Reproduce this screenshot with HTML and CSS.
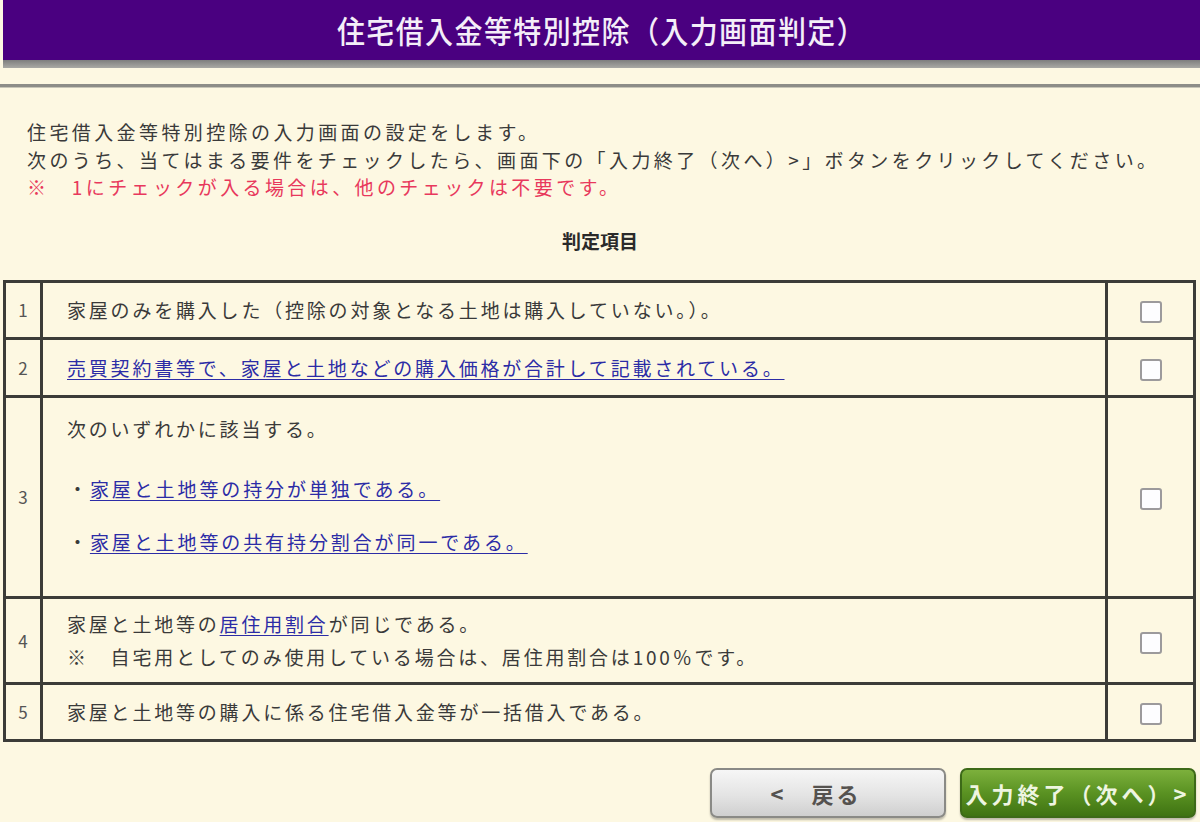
FILE: index.html
```html
<!DOCTYPE html>
<html lang="ja">
<head>
<meta charset="utf-8">
<title>住宅借入金等特別控除（入力画面判定）</title>
<link rel="stylesheet" href="styles.css">
</head>
<body>
<header class="page-header">
  <h1 class="page-title">住宅借入金等特別控除（入力画面判定）</h1>
</header>
<div class="header-shadow"></div>
<div class="divider"></div>

<section class="intro">
  <p>住宅借入金等特別控除の入力画面の設定をします。</p>
  <p>次のうち、当てはまる要件をチェックしたら、画面下の「入力終了（次へ）&gt;」ボタンをクリックしてください。</p>
  <p class="note">※　1にチェックが入る場合は、他のチェックは不要です。</p>
</section>

<h2 class="table-caption">判定項目</h2>

<table class="judge">
  <tr class="r1">
    <td class="num">1</td>
    <td class="desc">家屋のみを購入した（控除の対象となる土地は購入していない。）。</td>
    <td class="chk"><span class="box"></span></td>
  </tr>
  <tr class="r2">
    <td class="num">2</td>
    <td class="desc"><a href="#">売買契約書等で、家屋と土地などの購入価格が合計して記載されている。</a></td>
    <td class="chk"><span class="box"></span></td>
  </tr>
  <tr class="r3">
    <td class="num">3</td>
    <td class="desc">
      <p class="lead">次のいずれかに該当する。</p>
      <p class="bullet b1">・<a href="#">家屋と土地等の持分が単独である。</a></p>
      <p class="bullet b2">・<a href="#">家屋と土地等の共有持分割合が同一である。</a></p>
    </td>
    <td class="chk"><span class="box"></span></td>
  </tr>
  <tr class="r4">
    <td class="num">4</td>
    <td class="desc">家屋と土地等の<a href="#">居住用割合</a>が同じである。<br>※　自宅用としてのみ使用している場合は、居住用割合は100％です。</td>
    <td class="chk"><span class="box"></span></td>
  </tr>
  <tr class="r5">
    <td class="num">5</td>
    <td class="desc">家屋と土地等の購入に係る住宅借入金等が一括借入である。</td>
    <td class="chk"><span class="box"></span></td>
  </tr>
</table>

<div class="actions">
  <button class="btn btn-back">&lt;　戻る</button>
  <button class="btn btn-next">入力終了（次へ）&gt;</button>
</div>
</body>
</html>
```

FILE: styles.css
```css
html, body {
  margin: 0;
  padding: 0;
}
body {
  background: #fdf8e2;
  font-family: "Noto Sans CJK JP", "Noto Sans", sans-serif;
  color: #3a3a3a;
  width: 1200px;
  height: 822px;
  overflow: hidden;
}
.page-header {
  margin-left: 3px;
  height: 60px;
  background: #4a0080;
  display: flex;
  align-items: center;
  justify-content: center;
}
.page-title {
  margin: 0;
  color: #f4eef8;
  font-size: 28px;
  font-weight: 500;
  letter-spacing: 1.4px;
  transform: scaleY(1.08);
}
.header-shadow {
  margin-left: 3px;
  height: 8px;
  background: linear-gradient(#7e7e7e, #a9a9a4);
}
.divider {
  margin-top: 16px;
  height: 3px;
  background: #8d8d88;
  border-bottom: 1px solid #c8c6b8;
}
.intro {
  padding: 30px 0 0 27px;
  font-size: 19px;
  line-height: 27.5px;
  letter-spacing: 3.4px;
}
.intro p {
  margin: 0;
}
.intro .wide {
  letter-spacing: 3.8px;
}
.intro .note {
  color: #e8385c;
}
.table-caption {
  margin: 26px 0 0 0;
  text-align: center;
  font-size: 19px;
  font-weight: 700;
  line-height: 28px;
  color: #2a2a2a;
}
.judge {
  margin: 25px 0 0 3px;
  width: 1193px;
  border-collapse: collapse;
  border: 3px solid #3c3c38;
  font-size: 19px;
  letter-spacing: 2.8px;
}
.judge td {
  border: 3px solid #3c3c38;
  padding: 0;
  vertical-align: middle;
}
.judge .num {
  width: 34px;
  text-align: center;
  font-size: 17px;
  color: #555;
  letter-spacing: 0;
}
.judge .desc {
  padding-left: 24px;
  line-height: 33px;
}
.judge .chk {
  width: 85px;
  text-align: center;
}
.r1 { height: 57px; }
.r2 { height: 58px; }
.r3 { height: 201px; }
.r4 { height: 86px; }
.r5 { height: 57px; }
.r3 .desc {
  vertical-align: top;
  padding-top: 14px;
}
.r3 p {
  margin: 0;
}
.r3 .bullet {
  padding-left: 1px;
  letter-spacing: 2.9px;
}
.r3 .b1 {
  margin-top: 27px;
}
.r3 .b2 {
  margin-top: 20px;
}
.judge a {
  color: #2c2ca6;
  text-decoration: underline;
  text-underline-offset: 3px;
}
.box {
  display: inline-block;
  width: 18px;
  height: 18px;
  border: 2px solid #9c9a9c;
  border-radius: 3px;
  background: #fdfdff;
  vertical-align: middle;
}
.actions {
  display: flex;
  justify-content: flex-end;
  gap: 14px;
  margin-top: 26px;
  padding-right: 4px;
}
.btn {
  width: 236px;
  height: 50px;
  border-radius: 7px;
  font-family: "Noto Sans CJK JP", sans-serif;
  font-size: 22px;
  font-weight: 700;
  padding: 0;
}
.btn-back {
  background: linear-gradient(#f6f6f6, #e4e4e4 55%, #cfcfcf);
  border: 2px solid #8a8a86;
  color: #55524f;
  box-shadow: 0 2px 2px rgba(0,0,0,0.25);
  letter-spacing: 3px;
  padding-right: 24px;
}
.btn-next {
  background: linear-gradient(#7cb03c, #5a9222 50%, #3f7312);
  border: 2px solid #3d6a18;
  color: #eef5e0;
  box-shadow: 0 2px 2px rgba(0,0,0,0.25);
  letter-spacing: 4px;
}
```
